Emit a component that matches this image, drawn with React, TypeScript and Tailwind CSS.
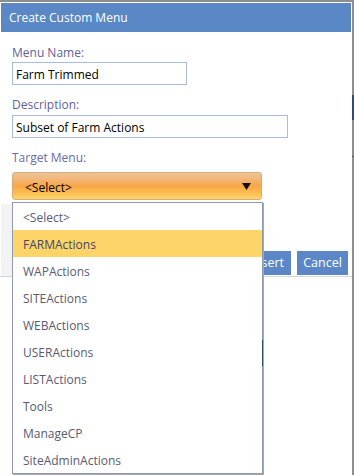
import React from "react";

const items = [
  "<Select>",
  "FARMActions",
  "WAPActions",
  "SITEActions",
  "WEBActions",
  "USERActions",
  "LISTActions",
  "Tools",
  "ManageCP",
  "SiteAdminActions",
];

export default function App() {
  return (
    <div
      className="relative w-[354px] h-[475px] bg-white overflow-hidden flex"
      style={{ fontFamily: '"Open Sans", "Noto Sans", sans-serif' }}
    >
      {/* dialog column */}
      <div className="w-[352px] h-full flex flex-col border-t-2 border-[#8e8e8e]">
        <div className="pt-[1px] px-[1px]">
          <div className="h-[29px] bg-[#5a87c5] flex items-center pl-[8px] pt-[1px] text-white text-[12px]">
            Create Custom Menu
          </div>
        </div>
        <div className="flex flex-col pl-[12px] pt-[12px]">
          <div className="h-[16px] leading-[16px] pt-[1px] text-[12px] text-[#5f5f9c]">Menu Name:</div>
          <div className="mt-[2px] w-[175px] h-[23px] border border-[#a9bce0] flex items-center pl-[3px] pt-[2px] text-[12px] text-black">
            Farm Trimmed
          </div>
          <div className="mt-[11px] h-[16px] leading-[16px] pt-[1px] text-[12px] text-[#5f5f9c]">Description:</div>
          <div className="mt-[3px] w-[276px] h-[23px] border border-[#a9bce0] flex items-center pl-[3px] pt-[2px] text-[12px] text-black">
            Subset of Farm Actions
          </div>
          <div className="mt-[11px] h-[16px] leading-[16px] pt-[1px] text-[12px] text-[#6a6aa6]">Target Menu:</div>
          <div className="mt-[7px] w-[250px] h-[28px] rounded-[3px] border border-[#d8ab78] bg-[linear-gradient(to_bottom,#ecc597_0%,#f2b77c_22%,#f8a646_50%,#fab94f_72%,#fdd66b_100%)] flex items-center justify-between pl-[12px] pr-[10px] pt-[3px] text-[12px] text-black">
            <span>&lt;Select&gt;</span>
            <svg width="9" height="7" viewBox="0 0 9 7" className="mb-[2px]">
              <polygon points="0,0 9,0 4.5,7" fill="#111" />
            </svg>
          </div>
        </div>
        {/* footer */}
        <div className="flex h-[77px] border-b border-[#d6d6d6]">
          <div className="w-[12px] mt-[4px] ml-[1px] bg-[#f3f3f3]" />
          <div className="flex-1 flex items-end justify-end gap-[6px] pr-[4px] pb-[1px]">
            <div className="h-[24px] px-[7px] pt-[1px] bg-[#5b87c6] text-white text-[12.5px] flex items-center">Insert</div>
            <div className="h-[24px] w-[51px] pt-[1px] bg-[#5b87c6] text-white text-[12.5px] flex items-center justify-center">Cancel</div>
          </div>
        </div>
        <div className="flex-1 bg-white" />
      </div>
      {/* right edge of page behind */}
      <div className="w-[2px] h-full bg-[#8f8f8f] flex flex-col">
        <div className="h-[95px]" />
        <div className="h-[25px] bg-[#2e4e74]" />
        <div className="h-[36px]" />
        <div className="h-[1px] bg-[#555]" />
      </div>

      {/* open dropdown list */}
      <div className="absolute left-[12px] top-[202px] w-[251px] h-[272px] bg-white border border-[#8d9bb0] shadow-[1px_1px_0_#a8a8a8]">
        {items.map((it, i) => (
          <div
            key={it}
            className={
              i === 1
                ? "h-[27px] flex items-center pl-[10px] pt-[2px] text-[12px] text-[#45456a] bg-[#fdd468]"
                : "h-[27px] flex items-center pl-[10px] pt-[2px] text-[12px] text-[#5a5a72]"
            }
          >
            {it}
          </div>
        ))}
        <div className="absolute right-[-1px] top-[137px] w-[1px] h-[26px] bg-[#2e4e74]" />
      </div>
    </div>
  );
}
